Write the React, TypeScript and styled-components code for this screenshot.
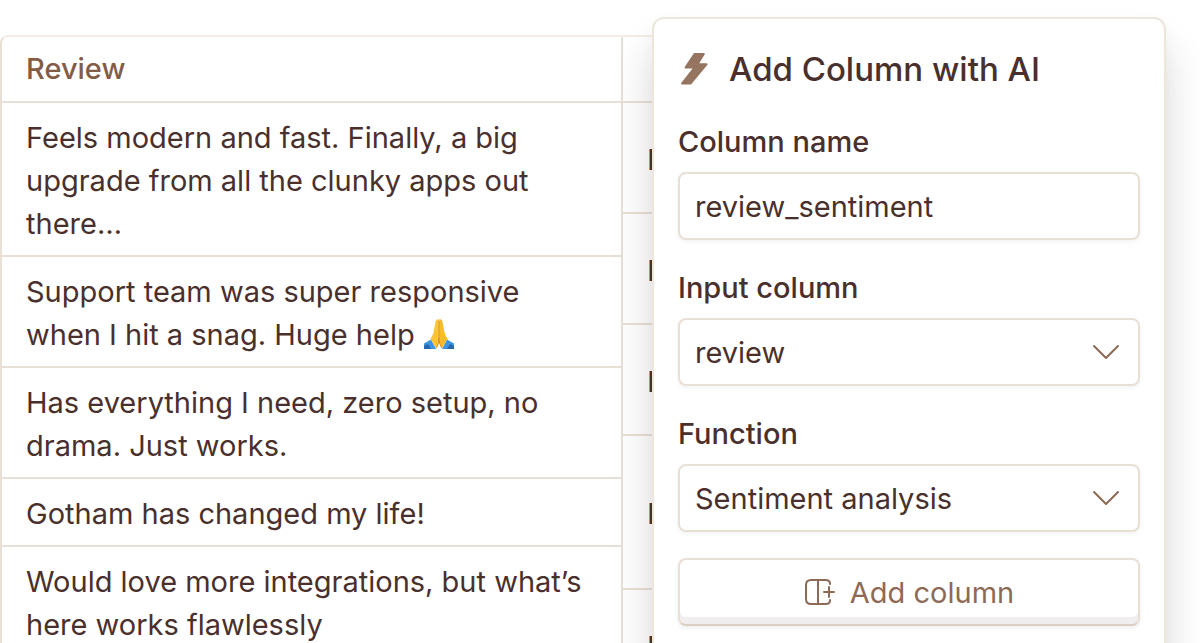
import React from "react";
import styled, { createGlobalStyle } from "styled-components";

const ink = "#4a302d";
const accent = "#8d6a55";
const line = "#e8e0d6";

const GlobalStyle = createGlobalStyle`
  *, *::before, *::after { box-sizing: border-box; }
  body {
    margin: 0;
    background: #fff;
    color: ${ink};
    font-family: Inter, "Liberation Sans", sans-serif;
    font-size: 29px;
    line-height: 43px;
  }
`;

const Page = styled.main`
  position: relative;
  height: 100vh;
  overflow: hidden;
  padding: 35px 60px 0 0;
`;

const Sheet = styled.div`
  display: grid;
  grid-template-columns: minmax(0, 621px) 1fr;
  border: 2px solid ${line};
  border-top-color: #f3ede5;
  border-radius: 8px;
`;

const Table = styled.table<{ $divided?: boolean }>`
  width: 100%;
  align-self: start;
  border-collapse: separate;
  border-spacing: 0;
  border-right: ${(p) => (p.$divided ? `2px solid ${line}` : "0")};
`;

const HeadCell = styled.th`
  height: 66px;
  padding: 10px 24px 11px;
  border-bottom: 2px solid ${line};
  color: #835c48;
  font-weight: 500;
  text-align: left;
`;

const Cell = styled.td<{ $lines: number }>`
  height: ${(p) => p.$lines * 43 + 25}px;
  padding: 13px 24px 10px;
  border-bottom: 2px solid ${line};
`;

const Emoji = styled.svg`
  width: 32px;
  height: 32px;
  vertical-align: -5px;
`;

const Dialog = styled.section`
  position: absolute;
  top: 17px;
  right: 34px;
  width: 514px;
  padding: 23px 24px 48px;
  border: 2px solid #ece6dc;
  border-radius: 12px;
  background: #fff;
  box-shadow: 0 32px 40px rgba(60, 40, 45, 0.18), 0 8px 16px rgba(60, 40, 45, 0.03);
`;

const Form = styled.form`
  display: flex;
  flex-direction: column;
  gap: 26px;
`;

const Title = styled.h2`
  display: flex;
  align-items: center;
  gap: 19px;
  margin: 0 0 24px;
  font-size: 33px;
  font-weight: 500;
  line-height: 54px;
`;

const Bolt = styled.svg`
  width: 32px;
  height: 36px;
  fill: #957560;
  stroke: #957560;
  stroke-width: 2;
  stroke-linejoin: round;
`;

const Field = styled.div`
  display: flex;
  flex-direction: column;
  gap: 9px;
`;

const Label = styled.label`
  font-weight: 500;
`;

const Input = styled.input`
  width: 100%;
  height: 68px;
  padding: 0 15px;
  border: 2px solid ${line};
  border-radius: 8px;
  background: #fff;
  color: ${ink};
  font: inherit;
  box-shadow: 0 2px 4px rgba(60, 40, 40, 0.05);
`;

const SelectBox = styled.div`
  display: grid;
  align-items: center;
  & > * { grid-area: 1 / 1; }
`;

const Select = styled(Input).attrs({ as: "select" })`
  appearance: none;
`;

const Chevron = styled.svg`
  justify-self: end;
  width: 28px;
  height: 16px;
  margin-right: 20px;
  fill: none;
  stroke: ${accent};
  stroke-width: 2;
  stroke-linecap: round;
  stroke-linejoin: round;
  pointer-events: none;
`;

const Button = styled.button`
  display: flex;
  align-items: center;
  justify-content: center;
  gap: 14px;
  height: 68px;
  padding: 0;
  border: 2px solid ${line};
  border-bottom-color: #dccfc4;
  border-radius: 8px;
  background: #fff;
  color: ${accent};
  font: inherit;
  box-shadow: inset 0 -7px 0 #f0eeee, 0 2px 4px rgba(60, 40, 40, 0.08);
`;

const ColumnIcon = styled.svg`
  width: 32px;
  height: 28px;
  fill: none;
  stroke: ${accent};
  stroke-width: 2;
  stroke-linecap: round;
`;

const FoldedHands = () => (
  <Emoji viewBox="0 0 32 32" role="img" aria-label="Folded hands">
    <path d="M1 25.500 8 21.500 13 31H1Z" fill="#3d94e0" />
    <path d="M31 25.500 24 21.500 19 31H31Z" fill="#3d94e0" />
    <path d="M1 28 5 26 8 31H1Z" fill="#2568ad" />
    <path d="M31 28 27 26 24 31H31Z" fill="#2568ad" />
    <path d="M15.800 1.500C14 .8 12.800 2 12.500 4L10.500 14.500C10.200 16.500 8.500 18.500 7.600 21L13 30C15 27.500 15.800 25 15.800 22Z" fill="#fcc535" />
    <path d="M16.200 1.500C18 .8 19.200 2 19.500 4L21.500 14.500C21.800 16.500 23.500 18.500 24.400 21L19 30C17 27.500 16.200 25 16.200 22Z" fill="#f9bb28" />
    <path d="M16 3V20C16 24 14.800 27.500 13 30M16 20C16 24 17.200 27.500 19 30" fill="none" stroke="#d98a12" strokeWidth="1" />
  </Emoji>
);

const reviews: { lines: number; text: React.ReactNode }[] = [
  { lines: 3, text: "Feels modern and fast. Finally, a big upgrade from all the clunky apps out there…" },
  { lines: 2, text: <>Support team was super responsive when I hit a snag. Huge help <FoldedHands /></> },
  { lines: 2, text: "Has everything I need, zero setup, no drama. Just works." },
  { lines: 1, text: "Gotham has changed my life!" },
  { lines: 2, text: "Would love more integrations, but what’s here works flawlessly" },
];

const neighbourLines = [2, 2, 2, 3, 2];

const Picker = ({ id, label, value }: { id: string; label: string; value: string }) => (
  <Field>
    <Label htmlFor={id}>{label}</Label>
    <SelectBox>
      <Select id={id} defaultValue={value}>
        <option value={value}>{value}</option>
      </Select>
      <Chevron viewBox="0 0 28 16" aria-hidden="true">
        <path d="M2 2 14 14 26 2" />
      </Chevron>
    </SelectBox>
  </Field>
);

export default function App() {
  return (
    <>
      <GlobalStyle />
      <Page>
        <Sheet>
          <Table $divided>
            <thead>
              <tr><HeadCell scope="col">Review</HeadCell></tr>
            </thead>
            <tbody>
              {reviews.map((r, i) => (
                <tr key={i}><Cell $lines={r.lines}>{r.text}</Cell></tr>
              ))}
            </tbody>
          </Table>
          <Table>
            <thead>
              <tr><HeadCell scope="col" /></tr>
            </thead>
            <tbody>
              {neighbourLines.map((n, i) => (
                <tr key={i}><Cell $lines={n}>I</Cell></tr>
              ))}
            </tbody>
          </Table>
        </Sheet>

        <Dialog role="dialog" aria-labelledby="dialog-title">
          <Title id="dialog-title">
            <Bolt viewBox="0 0 32 36" aria-hidden="true">
              <path d="M16.500 3H25.800L19.500 13.300H28.500L12.500 32.500H4L16.500 16.500H7.500Z" />
            </Bolt>
            Add Column with AI
          </Title>
          <Form onSubmit={(e) => e.preventDefault()}>
            <Field>
              <Label htmlFor="column-name">Column name</Label>
              <Input id="column-name" type="text" defaultValue="review_sentiment" />
            </Field>
            <Picker id="input-column" label="Input column" value="review" />
            <Picker id="function" label="Function" value="Sentiment analysis" />
            <Button type="submit">
              <ColumnIcon viewBox="0 0 32 28" aria-hidden="true">
                <path d="M26 6V5.500Q26 2 21.500 2H7Q2 2 2 7V21Q2 26 7 26H21.500Q26 26 26 22.500V22M14 2V26M25 9V19M20 14H30" />
              </ColumnIcon>
              Add column
            </Button>
          </Form>
        </Dialog>
      </Page>
    </>
  );
}
